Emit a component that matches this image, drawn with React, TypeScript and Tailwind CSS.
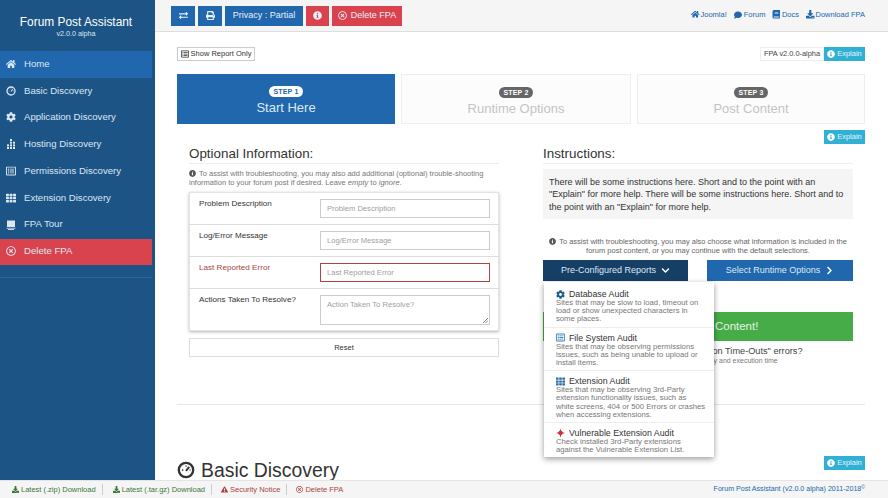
import {
  FaBook,
  FaCog,
  FaComment,
  FaDownload,
  FaExchangeAlt,
  FaExclamationTriangle,
  FaHome,
  FaInfoCircle,
  FaRegListAlt,
  FaPrint,
  FaRegTimesCircle,
  FaChevronDown,
  FaChevronRight,
  FaTh,
} from "react-icons/fa";
import type { ReactNode } from "react";

const Gauge = ({ className }: { className: string }) => (
  <svg viewBox="0 0 20 20" className={className} fill="none" stroke="currentColor">
    <circle cx="10" cy="10" r="8" strokeWidth="2.6" />
    <path d="M10 11 13.5 6.5" strokeWidth="2.2" />
    <path d="M5.5 10h1.5M10 5v1.5M14 10h1" strokeWidth="1.4" />
  </svg>
);

const HostingIcon = () => (
  <svg viewBox="0 0 10 10" className="h-[10px] w-[10px] fill-current">
    <rect x="4" y="0" width="2" height="2" />
    <rect x="4" y="2.7" width="2" height="2" />
    <rect x="7" y="2.7" width="2" height="2" />
    <rect x="1" y="5.4" width="2" height="2" />
    <rect x="4" y="5.4" width="2" height="2" />
    <rect x="7" y="5.4" width="2" height="2" />
    <rect x="1" y="8" width="2" height="2" />
    <rect x="4" y="8" width="2" height="2" />
    <rect x="7" y="8" width="2" height="2" />
  </svg>
);

const TourIcon = () => (
  <svg viewBox="0 0 10 10" className="h-[10px] w-[10px] fill-current">
    <rect x="1" y="0.5" width="8" height="6.5" />
    <rect x="0.5" y="7.8" width="9" height="0.8" />
    <rect x="2" y="9.1" width="6" height="0.9" />
  </svg>
);

const navItems = [
  { label: "Home", icon: <FaHome />, tone: "bg-[#2067ad]" },
  { label: "Basic Discovery", icon: <Gauge className="h-[10px] w-[10px]" />, tone: "" },
  { label: "Application Discovery", icon: <FaCog />, tone: "" },
  { label: "Hosting Discovery", icon: <HostingIcon />, tone: "" },
  { label: "Permissions Discovery", icon: <FaRegListAlt />, tone: "" },
  { label: "Extension Discovery", icon: <FaTh />, tone: "" },
  { label: "FPA Tour", icon: <TourIcon />, tone: "" },
  { label: "Delete FPA", icon: <FaRegTimesCircle />, tone: "bg-[#d9434e]" },
];

const ExplainButton = () => (
  <span className="flex h-[14px] w-[41px] items-center justify-center gap-[2px] bg-[#31b0d5] text-[7.5px] text-[#e4f5fa]">
    <FaInfoCircle className="text-[8px] text-white" />
    Explain
  </span>
);

const TopButton = ({ className, children }: { className: string; children: ReactNode }) => (
  <span className={`flex h-[20px] items-center justify-center gap-1 text-[9px] text-[#e8f0f8] ${className}`}>
    {children}
  </span>
);

const Step = ({ n, title, active }: { n: number; title: string; active?: boolean }) => (
  <div
    className={`flex h-[50px] flex-col items-center pt-[12px] ${
      active ? "bg-[#2067ad] text-[#dce9f5]" : "border border-[#eeeeee] bg-[#fcfcfc] text-[#c4c4c4]"
    }`}
  >
    <span
      className={`rounded-full px-[4px] text-[7px] leading-[11px] font-bold tracking-[0.2px] ${
        active ? "bg-white text-[#2067ad]" : "bg-[#666666] text-white"
      }`}
    >
      STEP {n}
    </span>
    <span className="mt-[3px] text-[13px] leading-[16px]">{title}</span>
  </div>
);

const FormRow = ({
  label,
  placeholder,
  error,
  area,
}: {
  label: string;
  placeholder: string;
  error?: boolean;
  area?: boolean;
}) => (
  <div className={`flex border-[#dddddd] pt-[6px] pl-[9px] ${area ? "h-[41px]" : "h-[32px] border-b"}`}>
    <span className={`w-[121px] shrink-0 text-[8.1px] leading-[10px] ${error ? "text-[#a94442]" : "text-[#333333]"}`}>
      {label}
    </span>
    <span
      className={`relative block w-[170px] border px-[6px] text-[7.6px] text-[#a0a0a0] ${
        area ? "h-[30px] pt-[3px] leading-[11px]" : "h-[19px] leading-[17px]"
      } ${error ? "border-[#a94442]" : "border-[#cccccc]"}`}
    >
      {placeholder}
      {area && (
        <svg viewBox="0 0 6 6" className="absolute right-[1px] bottom-[1px] h-[5px] w-[5px] stroke-[#666666]">
          <path d="M0 6 6 0M3 6 6 3" />
        </svg>
      )}
    </span>
  </div>
);

const MenuItem = ({
  icon,
  title,
  lines,
  first,
  last,
}: {
  icon: ReactNode;
  title: string;
  lines: string[];
  first?: boolean;
  last?: boolean;
}) => (
  <div className={`px-[12px] pb-[3px] ${first ? "pt-[7px]" : "pt-[5px]"} ${last ? "" : "border-b border-[#eeeeee]"}`}>
    <div className="flex items-center gap-[4px] text-[8.8px] leading-[10px] text-[#333333]">
      <span className="flex w-[9px] justify-center text-[9px]">{icon}</span>
      {title}
    </div>
    {lines.map((line) => (
      <p key={line} className="text-[7.7px] leading-[8.2px] whitespace-nowrap text-[#777777]">
        {line}
      </p>
    ))}
  </div>
);

const App = () => {
  return (
    <div className="relative flex h-[498px] w-[888px] flex-col overflow-hidden bg-white font-['Liberation_Sans',Arial,sans-serif]">
      <div className="flex min-h-0 flex-1">
        {/* Sidebar */}
        <aside className="w-[155px] shrink-0 bg-[#1d5486] pr-[3px] text-[#dbe7f2]">
          <div className="pt-[15px] text-center">
            <h1 className="text-[11.9px] leading-[14px] text-white">Forum Post Assistant</h1>
            <p className="text-[7.2px] leading-[9px]">v2.0.0 alpha</p>
          </div>
          <nav className="mt-[13px]">
            {navItems.map((item) => (
              <div key={item.label} className={`flex h-[26.8px] items-center pb-[1px] pl-[6px] text-[9.6px] ${item.tone}`}>
                <span className="flex w-[18px] text-[10px]">{item.icon}</span>
                {item.label}
              </div>
            ))}
          </nav>
          <div className="mt-[12px] border-t border-[#2d6596]" />
        </aside>

        {/* Main column */}
        <main className="min-w-0 flex-1">
          <div className="flex h-[32px] items-center justify-between border-b border-[#dddddd] bg-[#f5f5f5] pr-[23px] pl-[16px]">
            <div className="flex gap-[3px]">
              <TopButton className="w-[24px] bg-[#2067ad]"><FaExchangeAlt /></TopButton>
              <TopButton className="w-[24px] bg-[#2067ad]"><FaPrint /></TopButton>
              <TopButton className="w-[78px] bg-[#2067ad]">Privacy : Partial</TopButton>
              <TopButton className="w-[23px] bg-[#d9434e]"><FaInfoCircle /></TopButton>
              <TopButton className="w-[70px] bg-[#d9434e]"><FaRegTimesCircle />Delete FPA</TopButton>
            </div>
            <div className="flex items-center gap-[7px] pb-[2px] text-[7.5px] text-[#2067ad]">
              <span className="flex items-center gap-[1px]"><FaHome className="text-[8.5px]" />Joomla!</span>
              <span className="flex items-center gap-[2px]"><FaComment className="text-[8px]" />Forum</span>
              <span className="flex items-center gap-[1px]"><FaBook className="text-[8.5px]" />Docs</span>
              <span className="flex items-center gap-[1px]"><FaDownload className="text-[8.5px]" />Download FPA</span>
            </div>
          </div>

          <div className="pr-[23px] pl-[22px]">
            <div className="mt-[15px] flex h-[14px] items-center justify-between">
              <span className="flex h-[14px] w-[78px] items-center justify-center gap-[2px] border border-[#cccccc] text-[7.5px] text-[#333333]">
                <FaRegListAlt className="text-[8px]" />
                Show Report Only
              </span>
              <div className="flex items-center">
                <span className="flex h-[14px] w-[64px] items-center justify-center border border-[#eeeeee] text-[7.4px] text-[#444444]">
                  FPA v2.0.0-alpha
                </span>
                <ExplainButton />
              </div>
            </div>

            <div className="mt-[13px] grid grid-cols-[218px_230px_228px] gap-[6px]">
              <Step n={1} title="Start Here" active />
              <Step n={2} title="Runtime Options" />
              <Step n={3} title="Post Content" />
            </div>

            <div className="mt-[6px] flex justify-end">
              <ExplainButton />
            </div>

            <div className="relative flex justify-between px-[12px]">
              {/* Optional information */}
              <section className="w-[310px]">
                <h2 className="border-b border-[#eeeeee] pt-[1px] pb-[1px] text-[13.4px] leading-[17px] text-[#333333]">
                  Optional Information:
                </h2>
                <p className="mt-[6px] text-[7.5px] leading-[8.7px] text-[#777777]">
                  <FaInfoCircle className="mr-[3px] inline align-[-1px] text-[7px] text-[#555555]" />
                  To assist with troubleshooting, you may also add additional (optional) trouble-shooting information to your forum post if desired. Leave <em>empty</em> to <em>ignore</em>.
                </p>
                <div className="mt-[5px] border border-[#e4e4e4] shadow-[0_1px_3px_rgba(0,0,0,0.3)]">
                  <FormRow label="Problem Description" placeholder="Problem Description" />
                  <FormRow label="Log/Error Message" placeholder="Log/Error Message" />
                  <FormRow label="Last Reported Error" placeholder="Last Reported Error" error />
                  <FormRow label="Actions Taken To Resolve?" placeholder="Action Taken To Resolve?" area />
                </div>
                <div className="mt-[7px] flex h-[19px] items-center justify-center border border-[#dddddd] text-[7.5px] text-[#333333]">
                  Reset
                </div>
              </section>

              {/* Instructions */}
              <section className="relative w-[310px]">
                <h2 className="border-b border-[#eeeeee] pt-[1px] pb-[1px] text-[13.4px] leading-[17px] text-[#333333]">
                  Instructions:
                </h2>
                <div className="mt-[5px] h-[50px] bg-[#f5f5f5] px-[6px] pt-[7px] text-[9px] leading-[12.4px] text-[#333333]">
                  There will be some instructions here. Short and to the point with an "Explain" for more help. There will be some instructions here. Short and to the point with an "Explain" for more help.
                </div>
                <p className="mt-[19px] px-[2px] text-center text-[7.5px] leading-[8.7px] text-[#666666]">
                  <FaInfoCircle className="mr-[3px] inline align-[-1px] text-[7px] text-[#555555]" />
                  To assist with troubleshooting, you may also choose what information is included in the forum post content, or you may continue with the default selections.
                </p>
                <div className="mt-[5px] flex justify-between">
                  <span className="flex h-[21px] w-[145px] items-center justify-center gap-[5px] bg-[#163f66] text-[9px] text-[#dce9f5]">
                    Pre-Configured Reports <FaChevronDown className="text-[9px] text-white" />
                  </span>
                  <span className="flex h-[21px] w-[146px] items-center justify-center gap-[5px] bg-[#2067ad] text-[9px] text-[#dce9f5]">
                    Select Runtime Options <FaChevronRight className="text-[9px] text-white" />
                  </span>
                </div>
                <div className="mt-[31px] flex h-[29px] items-center justify-center bg-[#45ac47] text-[11.5px] text-[#e6f5e6]">
                  Generate Post Content!
                </div>
                <p className="mt-[5px] text-center text-[9.2px] leading-[11px] text-[#444444]">
                  Are you getting "PHP Execution Time-Outs" errors?
                </p>
                <p className="text-center text-[7px] leading-[8.5px] text-[#777777]">
                  Try increasing the PHP memory and execution time
                </p>

                {/* Pre-configured reports dropdown */}
                <div className="absolute top-[138px] left-[1px] w-[170px] bg-white shadow-[0_2px_6px_rgba(0,0,0,0.4)]">
                  <MenuItem
                    first
                    icon={<FaCog className="text-[#1d5f86]" />}
                    title="Database Audit"
                    lines={["Sites that may be slow to load, timeout on", "load or show unexpected characters in", "some places."]}
                  />
                  <MenuItem
                    icon={<FaRegListAlt className="text-[#3a86b8]" />}
                    title="File System Audit"
                    lines={["Sites that may be observing permissions", "issues, such as being unable to upload or", "install items."]}
                  />
                  <MenuItem
                    icon={<FaTh className="text-[#2a6ea3]" />}
                    title="Extension Audit"
                    lines={["Sites that may be observing 3rd-Party", "extension functionality issues, such as", "white screens, 404 or 500 Errors or crashes", "when accessing extensions."]}
                  />
                  <MenuItem
                    last
                    icon={
                      <svg viewBox="0 0 10 10" className="h-[10px] w-[10px] fill-[#c8323f]">
                        <path d="M5 0 6.2 3.8 10 5 6.2 6.2 5 10 3.8 6.2 0 5 3.8 3.8Z" />
                        <circle cx="5" cy="5" r="2.4" />
                      </svg>
                    }
                    title="Vulnerable Extension Audit"
                    lines={["Check installed 3rd-Party extensions", "against the Vulnerable Extension List."]}
                  />
                </div>
              </section>
            </div>

            <div className="mt-[38px] border-t border-[#e6e6e6]" />

            <div className="mt-[51px] flex items-start justify-between">
              <h2 className="mt-[4px] flex items-center gap-[6px] text-[19.4px] leading-[20px] text-[#333333]">
                <Gauge className="h-[18px] w-[18px]" />
                Basic Discovery
              </h2>
              <ExplainButton />
            </div>
          </div>
        </main>
      </div>

      {/* Footer */}
      <footer className="absolute inset-x-0 bottom-0 flex h-[18px] items-center justify-between border-t border-[#e4e4e4] bg-[#f5f5f5] pr-[23px] pl-[12px] text-[7.5px]">
        <div className="flex items-center">
          <span className="flex items-center gap-[2px] border-r border-[#cccccc] pr-[6px] text-[#3c763d]">
            <FaDownload className="text-[7px]" />Latest (.zip) Download
          </span>
          <span className="ml-[10px] flex items-center gap-[2px] border-r border-[#cccccc] pr-[6px] text-[#3c763d]">
            <FaDownload className="text-[7px]" />Latest (.tar.gz) Download
          </span>
          <span className="ml-[9px] flex items-center gap-[2px] border-r border-[#cccccc] pr-[6px] text-[#a94442]">
            <FaExclamationTriangle className="text-[7px]" />Security Notice
          </span>
          <span className="ml-[9px] flex items-center gap-[2px] text-[#a94442]">
            <FaRegTimesCircle className="text-[7px]" />Delete FPA
          </span>
        </div>
        <span className="text-[7.1px] text-[#2067ad]">
          Forum Post Assistant (v2.0.0 alpha) 2011-2018<sup className="text-[5px]">©</sup>
        </span>
      </footer>
    </div>
  );
};

export default App;
